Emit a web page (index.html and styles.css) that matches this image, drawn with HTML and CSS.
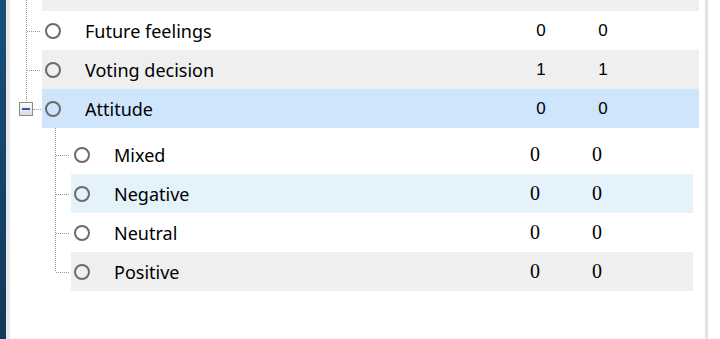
FILE: index.html
```html
<!DOCTYPE html>
<html lang="en">
<head>
  <meta charset="UTF-8">
  <title>Codes</title>
  <link rel="stylesheet" href="styles.css">
</head>
<body>
  <div class="edge"></div>
  <div class="gutter"></div>

  <div class="pane">
    <div class="tree">
      <div class="row stub"></div>

      <div class="row parent">
        <span class="node"></span>
        <span class="label">Future feelings</span>
        <span class="num">0</span>
        <span class="num">0</span>
      </div>
      <div class="row parent alt">
        <span class="node"></span>
        <span class="label">Voting decision</span>
        <span class="num">1</span>
        <span class="num">1</span>
      </div>
      <div class="row parent selected">
        <span class="toggle"></span>
        <span class="node"></span>
        <span class="label">Attitude</span>
        <span class="num">0</span>
        <span class="num">0</span>
      </div>

      <div class="children">
        <div class="row child">
          <span class="node"></span>
          <span class="label">Mixed</span>
          <span class="num">0</span>
          <span class="num">0</span>
        </div>
        <div class="row child hover">
          <span class="node"></span>
          <span class="label">Negative</span>
          <span class="num">0</span>
          <span class="num">0</span>
        </div>
        <div class="row child">
          <span class="node"></span>
          <span class="label">Neutral</span>
          <span class="num">0</span>
          <span class="num">0</span>
        </div>
        <div class="row child alt">
          <span class="node"></span>
          <span class="label">Positive</span>
          <span class="num">0</span>
          <span class="num">0</span>
        </div>
      </div>
    </div>
  </div>

  <div class="rborder"></div>
  <div class="rspace"></div>
</body>
</html>
```

FILE: styles.css
```css
html, body {
  height: 100%;
}
body {
  margin: 0;
  display: flex;
  background: #fff;
  font-family: "Noto Sans", "Open Sans", sans-serif;
  color: #000;
  overflow: hidden;
}
.edge {
  width: 6px;
  background: linear-gradient(#174f7a, #12395a);
}
.gutter {
  width: 4px;
  background: #e9e9e9;
}
.pane {
  flex: 1;
}
.rborder {
  width: 3px;
  background: #e4e4e4;
}
.rspace {
  width: 12px;
}

.tree {
  position: relative;
  padding-left: 32px;
  margin-right: 6px;
}
/* root connector */
.tree::before {
  content: "";
  position: absolute;
  left: 16px;
  top: 0;
  height: 103px;
  border-left: 1px dotted #999;
}

.row {
  position: relative;
  display: flex;
  align-items: center;
  height: 39px;
  font-size: 18px;
}
.row.stub {
  height: 11px;
  background: #efefef;
}
.row.alt {
  background: #efefef;
}
.row.selected {
  background: #cfe5fc;
}
.row.hover {
  background: #e4f2fa;
}

.parent::before,
.child::before {
  content: "";
  position: absolute;
  left: -15px;
  width: 13px;
  top: 50%;
  border-top: 1px dotted #999;
}
.selected::before {
  left: -9px;
  width: 8px;
}

.node {
  width: 12px;
  height: 12px;
  border: 2px solid #6b6b6b;
  border-radius: 50%;
  margin-left: 3px;
  flex: none;
}

.label {
  flex: 1;
  margin-left: 24px;
}

.num {
  width: 62px;
  text-align: center;
  font-family: "Liberation Sans", Arial, sans-serif;
  font-size: 17px;
}
.parent .num:last-child {
  margin-right: 65px;
}

.toggle {
  position: absolute;
  left: -23px;
  top: 13px;
  width: 12px;
  height: 12px;
  border: 1px solid #8a8a8a;
  background: linear-gradient(#fcfcfc, #dcdcdc);
}
.toggle::after {
  content: "";
  position: absolute;
  left: 2px;
  top: 5px;
  width: 8px;
  height: 2px;
  background: #2e58a6;
}

.children {
  position: relative;
  margin-top: 7px;
  padding-left: 29px;
  margin-right: 6px;
}
.children::before {
  content: "";
  position: absolute;
  left: 13px;
  top: -7px;
  height: 143px;
  border-left: 1px dotted #999;
}
.child .num {
  font-family: "Liberation Serif", "Times New Roman", serif;
  font-size: 20px;
}
.child .num:last-child {
  margin-right: 65px;
}
```
